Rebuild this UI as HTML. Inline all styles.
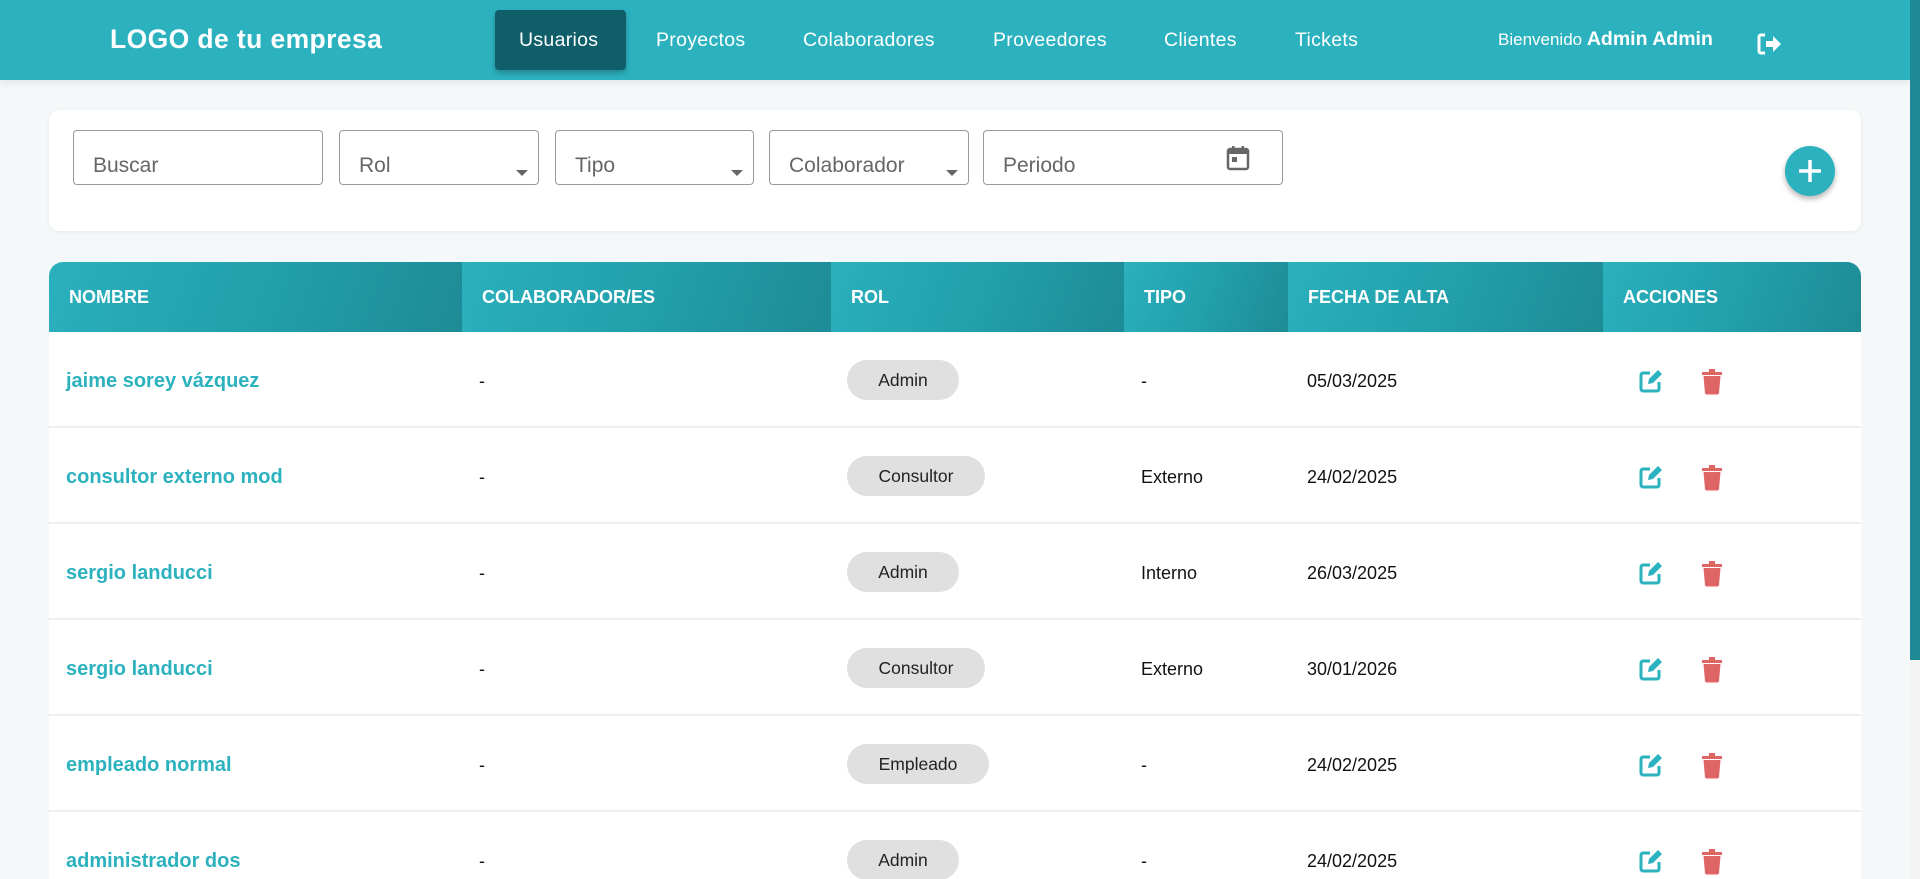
<!DOCTYPE html>
<html><head><meta charset="utf-8"><style>
*{box-sizing:border-box;margin:0;padding:0}
html,body{width:1920px;height:879px;overflow:hidden}
body{background:#f4f8f9;font-family:"Liberation Sans",Arial,sans-serif;position:relative}
.hdr{position:absolute;left:0;top:0;width:1910px;height:80px;background:#2cb2bf;box-shadow:0 3px 8px rgba(0,0,0,.08)}
.logo{position:absolute;left:110px;top:24px;color:#fff;font-weight:bold;font-size:26.5px;letter-spacing:.4px}
.nav{position:absolute;top:10px;height:60px;line-height:60px;color:#fff;font-size:19.5px;letter-spacing:.3px}
.act{background:#0f5e6a;border-radius:4px;padding:0 24px;width:131px;box-shadow:0 3px 6px rgba(0,0,0,.25)}
.sb{position:absolute;left:1910px;top:0;width:10px;height:879px;background:#f4f4f4}
.sb div{width:10px;height:660px;background:#1e8a95}
.card{position:absolute;left:49px;top:110px;width:1812px;height:121px;background:#fff;border-radius:10px;box-shadow:0 1px 4px rgba(0,0,0,.06)}
.inp{position:absolute;top:130px;height:55px;border:1px solid #9a9a9a;border-radius:4px;font-size:21px;color:#666;padding:23px 0 0 19px}
.arr{position:absolute;right:10px;top:39px;width:0;height:0;border-left:6px solid transparent;border-right:6px solid transparent;border-top:6px solid #666}
.plus{position:absolute;left:1785px;top:146px;width:50px;height:50px;border-radius:50%;background:#2cb2bf;box-shadow:0 3px 6px rgba(0,0,0,.3)}
.tbl{position:absolute;left:49px;top:262px;width:1812px;height:640px;background:#fff;border-radius:14px 14px 0 0;overflow:hidden}
.th{position:absolute;top:0;height:70px;background:linear-gradient(110deg,#2bb0bd 0%,#22a0ac 50%,#1d8b96 100%);color:#fff;font-weight:bold;font-size:18px;line-height:70px;padding-left:20px}
.row{position:absolute;left:0;width:1812px;height:96px;border-bottom:2px solid #eef0f0}
.c{position:absolute;top:2px;line-height:94px;font-size:18px;color:#111}
.nm{color:#2cb2bf;font-weight:bold;font-size:20px;left:17px}
.chip{position:absolute;top:28px;height:40px;line-height:40px;background:#e0e0e0;border-radius:20px;font-size:17.5px;color:#222;text-align:center}
.ic{position:absolute;top:36px}
</style></head><body>
<div class="hdr">
<div class="logo">LOGO de tu empresa</div>
<div class="nav act" style="left:495px">Usuarios</div>
<div class="nav" style="left:656px">Proyectos</div>
<div class="nav" style="left:803px">Colaboradores</div>
<div class="nav" style="left:993px">Proveedores</div>
<div class="nav" style="left:1164px">Clientes</div>
<div class="nav" style="left:1295px">Tickets</div>
<div style="position:absolute;left:1498px;top:28px;color:#fff;font-size:17px">Bienvenido <b style="font-size:19.5px">Admin Admin</b></div>
<svg style="position:absolute;left:1757px;top:32px" width="26" height="24" viewBox="0 0 26 24"><path d="M8 3H4a2 2 0 0 0-2 2v14a2 2 0 0 0 2 2h4" fill="none" stroke="#fff" stroke-width="3"/><path d="M9 9h7V4l8 8-8 8v-5H9z" fill="#fff"/></svg>
</div>
<div class="sb"><div></div></div>
<div class="card"></div>
<div class="inp" style="left:73px;width:250px">Buscar</div>
<div class="inp" style="left:339px;width:200px">Rol<span class="arr"></span></div>
<div class="inp" style="left:555px;width:199px">Tipo<span class="arr"></span></div>
<div class="inp" style="left:769px;width:200px">Colaborador<span class="arr"></span></div>
<div class="inp" style="left:983px;width:300px">Periodo
<svg style="position:absolute;left:242px;top:14px" width="24" height="26" viewBox="0 0 24 26"><rect x="2" y="4" width="20" height="20" rx="2" fill="none" stroke="#666" stroke-width="2.5"/><rect x="2" y="4" width="20" height="5" fill="#666"/><rect x="6" y="1" width="2.5" height="5" fill="#666"/><rect x="15.5" y="1" width="2.5" height="5" fill="#666"/><rect x="6" y="12" width="5" height="5" fill="#666"/></svg></div>
<div class="plus"><svg width="50" height="50"><path d="M25 14v22M14 25h22" stroke="#fff" stroke-width="3.5"/></svg></div>
<div class="tbl">
<div class="th" style="left:0;width:413px">NOMBRE</div>
<div class="th" style="left:413px;width:369px">COLABORADOR/ES</div>
<div class="th" style="left:782px;width:293px">ROL</div>
<div class="th" style="left:1075px;width:164px">TIPO</div>
<div class="th" style="left:1239px;width:315px">FECHA DE ALTA</div>
<div class="th" style="left:1554px;width:258px">ACCIONES</div>
</div>
<div style="position:absolute;left:49px;top:332px;width:1812px">
<div class="row" style="top:0"><span class="c nm">jaime sorey vázquez</span><span class="c" style="left:430px">-</span><span class="chip" style="left:798px;width:112px">Admin</span><span class="c" style="left:1092px">-</span><span class="c" style="left:1258px">05/03/2025</span>
<svg class="ic" style="left:1589px" width="26" height="26" viewBox="0 0 26 26"><path d="M12 5H5a2 2 0 0 0-2 2v14a2 2 0 0 0 2 2h14a2 2 0 0 0 2-2v-7" fill="none" stroke="#2cb2bf" stroke-width="3"/><path d="M10 16l1-5 9-9 4 4-9 9z" fill="#2cb2bf"/></svg>
<svg class="ic" style="left:1651px" width="24" height="27" viewBox="0 0 24 27"><path d="M2 4h20v3H2zM9 1h6v3H9z" fill="#e06666"/><path d="M3.5 8h17l-1.5 17a2 2 0 0 1-2 1.5H7A2 2 0 0 1 5 25z" fill="#e06666"/></svg></div>
<div class="row" style="top:96px"><span class="c nm">consultor externo mod</span><span class="c" style="left:430px">-</span><span class="chip" style="left:798px;width:138px">Consultor</span><span class="c" style="left:1092px">Externo</span><span class="c" style="left:1258px">24/02/2025</span>
<svg class="ic" style="left:1589px" width="26" height="26" viewBox="0 0 26 26"><path d="M12 5H5a2 2 0 0 0-2 2v14a2 2 0 0 0 2 2h14a2 2 0 0 0 2-2v-7" fill="none" stroke="#2cb2bf" stroke-width="3"/><path d="M10 16l1-5 9-9 4 4-9 9z" fill="#2cb2bf"/></svg>
<svg class="ic" style="left:1651px" width="24" height="27" viewBox="0 0 24 27"><path d="M2 4h20v3H2zM9 1h6v3H9z" fill="#e06666"/><path d="M3.5 8h17l-1.5 17a2 2 0 0 1-2 1.5H7A2 2 0 0 1 5 25z" fill="#e06666"/></svg></div>
<div class="row" style="top:192px"><span class="c nm">sergio landucci</span><span class="c" style="left:430px">-</span><span class="chip" style="left:798px;width:112px">Admin</span><span class="c" style="left:1092px">Interno</span><span class="c" style="left:1258px">26/03/2025</span>
<svg class="ic" style="left:1589px" width="26" height="26" viewBox="0 0 26 26"><path d="M12 5H5a2 2 0 0 0-2 2v14a2 2 0 0 0 2 2h14a2 2 0 0 0 2-2v-7" fill="none" stroke="#2cb2bf" stroke-width="3"/><path d="M10 16l1-5 9-9 4 4-9 9z" fill="#2cb2bf"/></svg>
<svg class="ic" style="left:1651px" width="24" height="27" viewBox="0 0 24 27"><path d="M2 4h20v3H2zM9 1h6v3H9z" fill="#e06666"/><path d="M3.5 8h17l-1.5 17a2 2 0 0 1-2 1.5H7A2 2 0 0 1 5 25z" fill="#e06666"/></svg></div>
<div class="row" style="top:288px"><span class="c nm">sergio landucci</span><span class="c" style="left:430px">-</span><span class="chip" style="left:798px;width:138px">Consultor</span><span class="c" style="left:1092px">Externo</span><span class="c" style="left:1258px">30/01/2026</span>
<svg class="ic" style="left:1589px" width="26" height="26" viewBox="0 0 26 26"><path d="M12 5H5a2 2 0 0 0-2 2v14a2 2 0 0 0 2 2h14a2 2 0 0 0 2-2v-7" fill="none" stroke="#2cb2bf" stroke-width="3"/><path d="M10 16l1-5 9-9 4 4-9 9z" fill="#2cb2bf"/></svg>
<svg class="ic" style="left:1651px" width="24" height="27" viewBox="0 0 24 27"><path d="M2 4h20v3H2zM9 1h6v3H9z" fill="#e06666"/><path d="M3.5 8h17l-1.5 17a2 2 0 0 1-2 1.5H7A2 2 0 0 1 5 25z" fill="#e06666"/></svg></div>
<div class="row" style="top:384px"><span class="c nm">empleado normal</span><span class="c" style="left:430px">-</span><span class="chip" style="left:798px;width:142px">Empleado</span><span class="c" style="left:1092px">-</span><span class="c" style="left:1258px">24/02/2025</span>
<svg class="ic" style="left:1589px" width="26" height="26" viewBox="0 0 26 26"><path d="M12 5H5a2 2 0 0 0-2 2v14a2 2 0 0 0 2 2h14a2 2 0 0 0 2-2v-7" fill="none" stroke="#2cb2bf" stroke-width="3"/><path d="M10 16l1-5 9-9 4 4-9 9z" fill="#2cb2bf"/></svg>
<svg class="ic" style="left:1651px" width="24" height="27" viewBox="0 0 24 27"><path d="M2 4h20v3H2zM9 1h6v3H9z" fill="#e06666"/><path d="M3.5 8h17l-1.5 17a2 2 0 0 1-2 1.5H7A2 2 0 0 1 5 25z" fill="#e06666"/></svg></div>
<div class="row" style="top:480px"><span class="c nm">administrador dos</span><span class="c" style="left:430px">-</span><span class="chip" style="left:798px;width:112px">Admin</span><span class="c" style="left:1092px">-</span><span class="c" style="left:1258px">24/02/2025</span>
<svg class="ic" style="left:1589px" width="26" height="26" viewBox="0 0 26 26"><path d="M12 5H5a2 2 0 0 0-2 2v14a2 2 0 0 0 2 2h14a2 2 0 0 0 2-2v-7" fill="none" stroke="#2cb2bf" stroke-width="3"/><path d="M10 16l1-5 9-9 4 4-9 9z" fill="#2cb2bf"/></svg>
<svg class="ic" style="left:1651px" width="24" height="27" viewBox="0 0 24 27"><path d="M2 4h20v3H2zM9 1h6v3H9z" fill="#e06666"/><path d="M3.5 8h17l-1.5 17a2 2 0 0 1-2 1.5H7A2 2 0 0 1 5 25z" fill="#e06666"/></svg></div>
</div>
</body></html>
